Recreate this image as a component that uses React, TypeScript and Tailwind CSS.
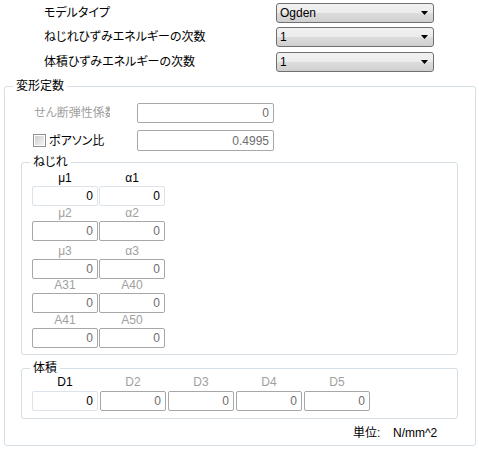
import React from "react";

type FieldProps = { value: string; enabled?: boolean; className?: string };

function Field({ value, enabled, className }: FieldProps) {
    return (
        <div
            className={`h-[20px] rounded-[2px] border bg-white flex items-center justify-end pr-[4px] ${enabled ? 'border-[#dde3ea] text-black' : 'border-[#a7a7a7] text-[#6d6d6d]'} ${className ?? ''}`}
        >
            {value}
        </div>
    );
}

function Combo({ value }: { value: string }) {
    return (
        <div className="w-[158px] h-[20px] border border-[#707070] rounded-[3px] bg-[linear-gradient(#f2f2f2,#ebebeb_50%,#dddddd_50%,#cfcfcf)] flex items-center pl-[3px] pr-[5px]">
            <span className="flex-1 text-black">{value}</span>
            <svg width="7" height="4" viewBox="0 0 7 4">
                <path d="M0 0h7L3.5 4z" fill="#000" />
            </svg>
        </div>
    );
}

function TopRow({ label, value, className }: { label: string; value: string; className?: string }) {
    return (
        <div className={`flex h-[20px] items-center ${className ?? ''}`}>
            <div className="w-[276px] pl-[44px] text-black">{label}</div>
            <Combo value={value} />
        </div>
    );
}

type Cell = { label: string; enabled?: boolean };

// ねじれ rows: label above, input below
const torsionRows: { cells: Cell[]; labelH: string }[] = [
    { cells: [{ label: "μ1", enabled: true }, { label: "α1", enabled: true }], labelH: "h-[17px]" },
    { cells: [{ label: "μ2" }, { label: "α2" }], labelH: "h-[15px]" },
    { cells: [{ label: "μ3" }, { label: "α3" }], labelH: "h-[18px]" },
    { cells: [{ label: "A31" }, { label: "A40" }], labelH: "h-[14px]" },
    { cells: [{ label: "A41" }, { label: "A50" }], labelH: "h-[15px]" },
];

const volumeCells: Cell[] = [
    { label: "D1", enabled: true },
    { label: "D2" },
    { label: "D3" },
    { label: "D4" },
    { label: "D5" },
];

export default function App() {
    return (
        <div className="w-[479px] h-[449px] bg-white text-[12px] leading-[14px] [font-family:'Liberation_Sans','Noto_Sans_CJK_JP',sans-serif] [font-feature-settings:'palt'] overflow-hidden">
            <div className="pt-[3px] flex flex-col">
                <TopRow label="モデルタイプ" value="Ogden" />
                <TopRow label="ねじれひずみエネルギーの次数" value="1" className="mt-[4px]" />
                <TopRow label="体積ひずみエネルギーの次数" value="1" className="mt-[5px]" />
            </div>

            <fieldset className="mt-[7px] ml-[4px] w-[472px] border border-[#d5dfe5] rounded-[3px] pb-[5px]">
                <legend className="ml-[8px] px-[3px] leading-[14px] text-black">変形定数</legend>

                <div className="mt-[10px] flex h-[20px] items-center">
                    <div className="w-[132px] pl-[29px]">
                        <div className="w-[76px] overflow-hidden whitespace-nowrap text-[#a0a0a0]">せん断弾性係数</div>
                    </div>
                    <Field value="0" className="w-[137px]" />
                </div>

                <div className="mt-[7px] flex h-[21px] items-center">
                    <div className="w-[132px] pl-[28px] flex items-center gap-[3px]">
                        <div className="w-[13px] h-[13px] border border-[#8f8f8f] p-[1px] bg-white">
                            <div className="w-full h-full bg-[linear-gradient(135deg,#cfcfcf,#f4f4f4)]" />
                        </div>
                        <span className="text-black">ポアソン比</span>
                    </div>
                    <Field value="0.4995" className="w-[137px] h-[21px]" />
                </div>

                <fieldset className="mt-[4px] ml-[16px] w-[437px] border border-[#d5dfe5] rounded-[3px] pb-[6px]">
                    <legend className="ml-[8px] px-[3px] leading-[14px] text-black">ねじれ</legend>
                    <div className="pl-[10px] flex flex-col">
                        {torsionRows.map((row, i) => (
                            <div key={i} className="flex flex-col">
                                <div className={`flex gap-[1px] ${row.labelH}`}>
                                    {row.cells.map((c) => (
                                        <div
                                            key={c.label}
                                            className={`w-[66px] flex items-end justify-center pb-[1px] ${c.enabled ? 'text-black' : 'text-[#a0a0a0]'}`}
                                        >
                                            {c.label}
                                        </div>
                                    ))}
                                </div>
                                <div className="flex gap-[1px]">
                                    {row.cells.map((c) => (
                                        <Field key={c.label} value="0" enabled={c.enabled} className="w-[66px]" />
                                    ))}
                                </div>
                            </div>
                        ))}
                    </div>
                </fieldset>

                <fieldset className="mt-[6px] ml-[16px] w-[437px] border border-[#d5dfe5] rounded-[3px] pb-[7px]">
                    <legend className="ml-[8px] px-[3px] leading-[14px] text-black">体積</legend>
                    <div className="pl-[10px] flex flex-col">
                        <div className="flex gap-[2px] h-[16px]">
                            {volumeCells.map((c) => (
                                <div
                                    key={c.label}
                                    className={`w-[66px] flex items-end justify-center pb-[2px] ${c.enabled ? 'text-black' : 'text-[#a0a0a0]'}`}
                                >
                                    {c.label}
                                </div>
                            ))}
                        </div>
                        <div className="flex gap-[2px]">
                            {volumeCells.map((c) => (
                                <Field key={c.label} value="0" enabled={c.enabled} className="w-[66px]" />
                            ))}
                        </div>
                    </div>
                </fieldset>

                <div className="mt-[7px] h-[14px] flex items-center pl-[348px] text-black">
                    <span className="w-[40px]">単位:</span>
                    <span>N/mm^2</span>
                </div>
            </fieldset>
        </div>
    );
}
